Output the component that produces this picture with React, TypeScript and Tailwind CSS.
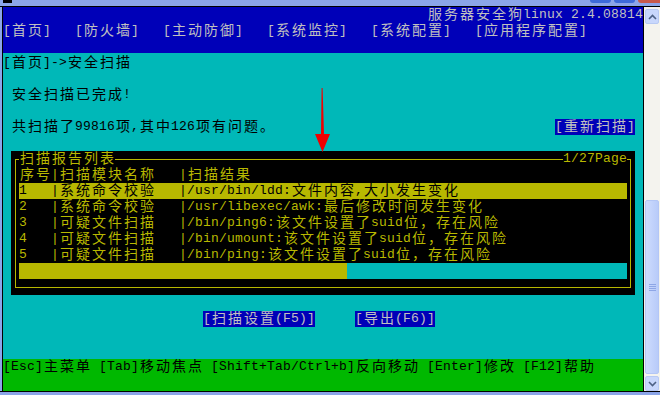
import type { ReactNode } from 'react';

// terminal cell: 8px wide for ascii, 16px for CJK, 16px high
function isWide(ch: string) {
  return ch.charCodeAt(0) > 0x2e7f;
}

function Cells({ text, className = '' }: { text: string; className?: string }) {
  return (
    <span className={`inline-flex h-4 ${className}`}>
      {Array.from(text).map((ch, i) =>
        isWide(ch) ? (
          <span key={i} className="w-4 text-center text-[14px] leading-4">
            {ch}
          </span>
        ) : (
          <span key={i} className="w-2 text-center text-[13px] leading-4">
            {ch === ' ' ? '\u00a0' : ch}
          </span>
        )
      )}
    </span>
  );
}

function Row({ children, className = '' }: { children?: ReactNode; className?: string }) {
  return <div className={`flex h-4 shrink-0 items-center ${className}`}>{children}</div>;
}

const results = [
  { no: '1', mod: '系统命令校验', res: '/usr/bin/ldd:文件内容,大小发生变化' },
  { no: '2', mod: '系统命令校验', res: '/usr/libexec/awk:最后修改时间发生变化' },
  { no: '3', mod: '可疑文件扫描', res: '/bin/ping6:该文件设置了suid位，存在风险' },
  { no: '4', mod: '可疑文件扫描', res: '/bin/umount:该文件设置了suid位，存在风险' },
  { no: '5', mod: '可疑文件扫描', res: '/bin/ping:该文件设置了suid位，存在风险' },
];

function ReportBox() {
  return (
    <div className="mx-2 flex h-[144px] shrink-0 flex-col bg-black px-[4px] pt-[8px] pb-[7px]">
      <div className="flex flex-1 flex-col border border-[#b8b800] text-[#b8b800]">
        <Row className="-mt-[9px] justify-between px-[3px]">
          <Cells text="扫描报告列表" className="bg-black" />
          <Cells text="1/27Page" className="bg-black" />
        </Row>
        <Row className="px-[3px]">
          <Cells text="序号|扫描模块名称   |扫描结果" />
        </Row>
        {results.map((r, i) => (
          <Row key={r.no} className={i === 0 ? 'mx-[3px] bg-[#b8b800] text-black' : 'px-[3px]'}>
            <Cells text={`${r.no}   |${r.mod}   |${r.res}`} />
          </Row>
        ))}
        <Row className="mx-[3px]">
          <div className="h-4 w-[328px] bg-[#b8b800]" />
          <div className="h-4 flex-1 bg-[#00b8b8]" />
        </Row>
      </div>
    </div>
  );
}

function Chevron({ up }: { up?: boolean }) {
  return (
    <svg width="9" height="6" viewBox="0 0 9 6">
      <polyline
        points={up ? '1,5 4.5,1.5 8,5' : '1,1 4.5,4.5 8,1'}
        fill="none"
        stroke="#4d6185"
        strokeWidth="1.6"
      />
    </svg>
  );
}

function Scrollbar() {
  return (
    <div className="flex w-4 flex-col bg-[#f4f3ee]">
      <div className="mx-[1px] mt-[2px] flex h-[15px] items-center justify-center rounded-[2px] border border-[#b7c9f3] bg-[#c8d7fc]">
        <Chevron up />
      </div>
      <div className="h-[176px]" />
      <div className="mx-[1px] flex h-[174px] items-center justify-center rounded-[2px] border border-[#b3c6f5] bg-gradient-to-r from-[#cddbfd] to-[#b8cbf9]">
        <div className="flex flex-col gap-[1px]">
          <div className="h-px w-[7px] bg-[#8ea6e6]" />
          <div className="h-px w-[7px] bg-[#8ea6e6]" />
          <div className="h-px w-[7px] bg-[#8ea6e6]" />
          <div className="h-px w-[7px] bg-[#8ea6e6]" />
        </div>
      </div>
      <div className="h-[2px]" />
      <div className="mx-[1px] flex h-[15px] items-center justify-center rounded-[2px] border border-[#b7c9f3] bg-[#c8d7fc]">
        <Chevron />
      </div>
    </div>
  );
}

export default function App() {
  return (
    <div className="relative h-[395px] w-[660px] overflow-hidden bg-[#8ba5e8] font-['Liberation_Mono','Noto_Sans_CJK_SC',monospace]">
      {/* bottom of the window title bar */}
      <div className="flex h-[7px] items-start border-b border-black">
        <div className="ml-[3px] h-[3px] w-[9px] bg-black" />
        <div className="ml-auto flex gap-[3px]">
          <div className="h-[3px] w-[21px] rounded-b-sm bg-[#3d6ad9]" />
          <div className="h-[3px] w-[21px] rounded-b-sm bg-[#3d6ad9]" />
          <div className="h-[3px] w-[22px] rounded-bl-sm bg-[#c8594a]" />
        </div>
      </div>

      <div className="flex h-[384px]">
        <div className="w-[3px] border-r border-black" />

        <div className="flex w-[640px] flex-col">
          <div className="h-[46px] shrink-0 bg-[#0000b8] text-[#c0c0c0]">
            <Row className="justify-end">
              <Cells text="服务器安全狗linux 2.4.08814" />
            </Row>
            <Row>
              <Cells text="[首页]   [防火墙]   [主动防御]   [系统监控]   [系统配置]   [应用程序配置]" />
            </Row>
          </div>

          <div className="flex flex-1 flex-col bg-[#00b8b8] pt-[2px] text-black">
            <Row>
              <Cells text="[首页]->安全扫描" />
            </Row>
            <Row />
            <Row className="pl-2">
              <Cells text="安全扫描已完成!" />
            </Row>
            <Row />
            <Row className="justify-between px-2">
              <Cells text="共扫描了99816项,其中126项有问题。" />
              <Cells text="[重新扫描]" className="bg-[#0000b8] text-[#c0c0c0]" />
            </Row>
            <Row />
            <ReportBox />
            <Row />
            <Row className="gap-10 pl-[200px]">
              <Cells text="[扫描设置(F5)]" className="bg-[#0000b8] text-[#c0c0c0]" />
              <Cells text="[导出(F6)]" className="bg-[#0000b8] text-[#c0c0c0]" />
            </Row>
          </div>

          <div className="h-8 shrink-0 bg-[#00b800] text-black">
            <Row>
              <Cells text="[Esc]主菜单 [Tab]移动焦点 [Shift+Tab/Ctrl+b]反向移动 [Enter]修改 [F12]帮助" />
            </Row>
          </div>
        </div>

        <div className="w-px bg-black" />
        <Scrollbar />
      </div>

      <div className="h-[4px] border-t border-black" />

      {/* red annotation arrow */}
      <svg className="absolute left-[313px] top-[86px]" width="20" height="68" viewBox="0 0 20 68">
        <polygon points="8.6,2 9.6,2 11,48 17,48 9.5,66 2,48 8,48" fill="#f00000" />
      </svg>
    </div>
  );
}
